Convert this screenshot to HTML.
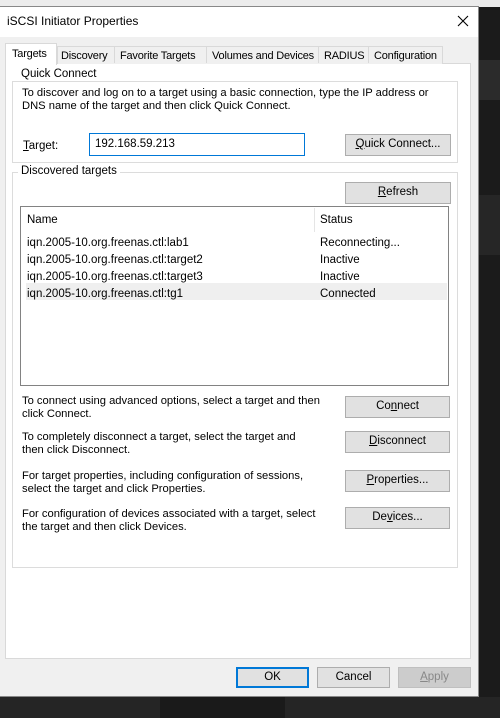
<!DOCTYPE html>
<html><head><style>
*{box-sizing:border-box;margin:0;padding:0}
body{width:500px;height:718px;overflow:hidden;background:#1e1e1e;font-family:"Liberation Sans",sans-serif;font-size:11.5px;color:#000;position:relative}
.a{position:absolute}
.btn{position:absolute;background:#e1e1e1;border:1px solid #adadad;text-align:center;line-height:19px;font-size:11.5px}
.t{position:absolute;white-space:nowrap}
.tab{position:absolute;white-space:nowrap;font-size:11px;letter-spacing:-0.2px}
u{text-decoration:underline}
</style></head><body>
<div class="a" style="left:0;top:0;width:500px;height:7px;background:#ececec"></div>
<div class="a" style="left:478px;top:7px;width:22px;height:711px;background:#1b1b1b"></div>
<div class="a" style="left:478px;top:60px;width:22px;height:40px;background:#2b2b2b"></div>
<div class="a" style="left:478px;top:195px;width:22px;height:60px;background:#262626"></div>
<div class="a" style="left:0;top:697px;width:500px;height:21px;background:#252525"></div>
<div class="a" style="left:160px;top:697px;width:125px;height:21px;background:#1a1a1a"></div>
<div class="a" style="left:0;top:6px;width:479px;height:691px;background:#f0f0f0;border:1px solid #888;border-left:none"></div>
<div class="a" style="left:0;top:7px;width:478px;height:30px;background:#fff"></div>
<div class="t" style="left:7px;top:14px;font-size:12px">iSCSI Initiator Properties</div>
<svg class="a" style="left:457px;top:15px" width="12" height="12"><path d="M1 1L11 11M11 1L1 11" stroke="#000" stroke-width="1.1"/></svg>
<div class="a" style="left:5px;top:63px;width:466px;height:596px;background:#fff;border:1px solid #d9d9d9"></div>
<div class="a" style="left:57px;top:46px;width:386px;height:18px;background:#f0f0f0;border:1px solid #d9d9d9;border-bottom:none"></div>
<div class="a" style="left:5px;top:43px;width:52px;height:22px;background:#fff;border:1px solid #d9d9d9;border-bottom:none"></div>
<div class="tab" style="left:12px;top:48px">Targets</div>
<div class="tab" style="left:61px;top:50px">Discovery</div>
<div class="a" style="left:114px;top:46px;width:1px;height:17px;background:#d9d9d9"></div>
<div class="tab" style="left:120px;top:50px">Favorite Targets</div>
<div class="a" style="left:206px;top:46px;width:1px;height:17px;background:#d9d9d9"></div>
<div class="tab" style="left:212px;top:50px">Volumes and Devices</div>
<div class="a" style="left:318px;top:46px;width:1px;height:17px;background:#d9d9d9"></div>
<div class="tab" style="left:324px;top:50px">RADIUS</div>
<div class="a" style="left:368px;top:46px;width:1px;height:17px;background:#d9d9d9"></div>
<div class="tab" style="left:374px;top:50px">Configuration</div>
<div class="a" style="left:12px;top:81px;width:446px;height:82px;border:1px solid #dcdcdc"></div>
<div class="t" style="left:18px;top:68px;background:#fff;padding:0 3px">Quick Connect</div>
<div class="t" style="left:22px;top:87px;line-height:13px;font-size:11.2px">To discover and log on to a target using a basic connection, type the IP address or<br>DNS name of the target and then click Quick Connect.</div>
<div class="t" style="left:23px;top:140px"><u>T</u>arget:</div>
<div class="a" style="left:89px;top:133px;width:216px;height:23px;border:1px solid #0078d7;background:#fff"></div>
<div class="t" style="left:95px;top:138px">192.168.59.213</div>
<div class="btn" style="left:345px;top:134px;width:106px;height:22px"><u>Q</u>uick Connect...</div>
<div class="a" style="left:12px;top:172px;width:446px;height:396px;border:1px solid #dcdcdc"></div>
<div class="t" style="left:18px;top:165px;background:#fff;padding:0 3px">Discovered targets</div>
<div class="btn" style="left:345px;top:182px;width:106px;height:22px"><u>R</u>efresh</div>
<div class="a" style="left:20px;top:206px;width:429px;height:180px;border:1px solid #828282;background:#fff"></div>
<div class="a" style="left:314px;top:208px;width:1px;height:24px;background:#e5e5e5"></div>
<div class="t" style="left:27px;top:214px">Name</div>
<div class="t" style="left:320px;top:214px">Status</div>
<div class="a" style="left:26px;top:283px;width:421px;height:17px;background:#efefef"></div>
<div class="t" style="left:27px;top:235px;line-height:17px">iqn.2005-10.org.freenas.ctl:lab1<br>iqn.2005-10.org.freenas.ctl:target2<br>iqn.2005-10.org.freenas.ctl:target3<br>iqn.2005-10.org.freenas.ctl:tg1</div>
<div class="t" style="left:320px;top:235px;line-height:17px">Reconnecting...<br>Inactive<br>Inactive<br>Connected</div>
<div class="t" style="left:22px;top:395px;line-height:13px;font-size:11.2px">To connect using advanced options, select a target and then<br>click Connect.</div>
<div class="btn" style="left:345px;top:396px;width:105px;height:22px">Co<u>n</u>nect</div>
<div class="t" style="left:22px;top:431px;line-height:13px;font-size:11.2px">To completely disconnect a target, select the target and<br>then click Disconnect.</div>
<div class="btn" style="left:345px;top:431px;width:105px;height:22px"><u>D</u>isconnect</div>
<div class="t" style="left:22px;top:470px;line-height:13px;font-size:11.2px">For target properties, including configuration of sessions,<br>select the target and click Properties.</div>
<div class="btn" style="left:345px;top:470px;width:105px;height:22px"><u>P</u>roperties...</div>
<div class="t" style="left:22px;top:508px;line-height:13px;font-size:11.2px">For configuration of devices associated with a target, select<br>the target and then click Devices.</div>
<div class="btn" style="left:345px;top:507px;width:105px;height:22px">De<u>v</u>ices...</div>
<div class="btn" style="left:236px;top:667px;width:73px;height:21px;border:2px solid #0078d7;line-height:17px">OK</div>
<div class="btn" style="left:317px;top:667px;width:73px;height:21px">Cancel</div>
<div class="btn" style="left:398px;top:667px;width:73px;height:21px;background:#ccc;border-color:#bfbfbf;color:#888"><u>A</u>pply</div>
</body></html>
